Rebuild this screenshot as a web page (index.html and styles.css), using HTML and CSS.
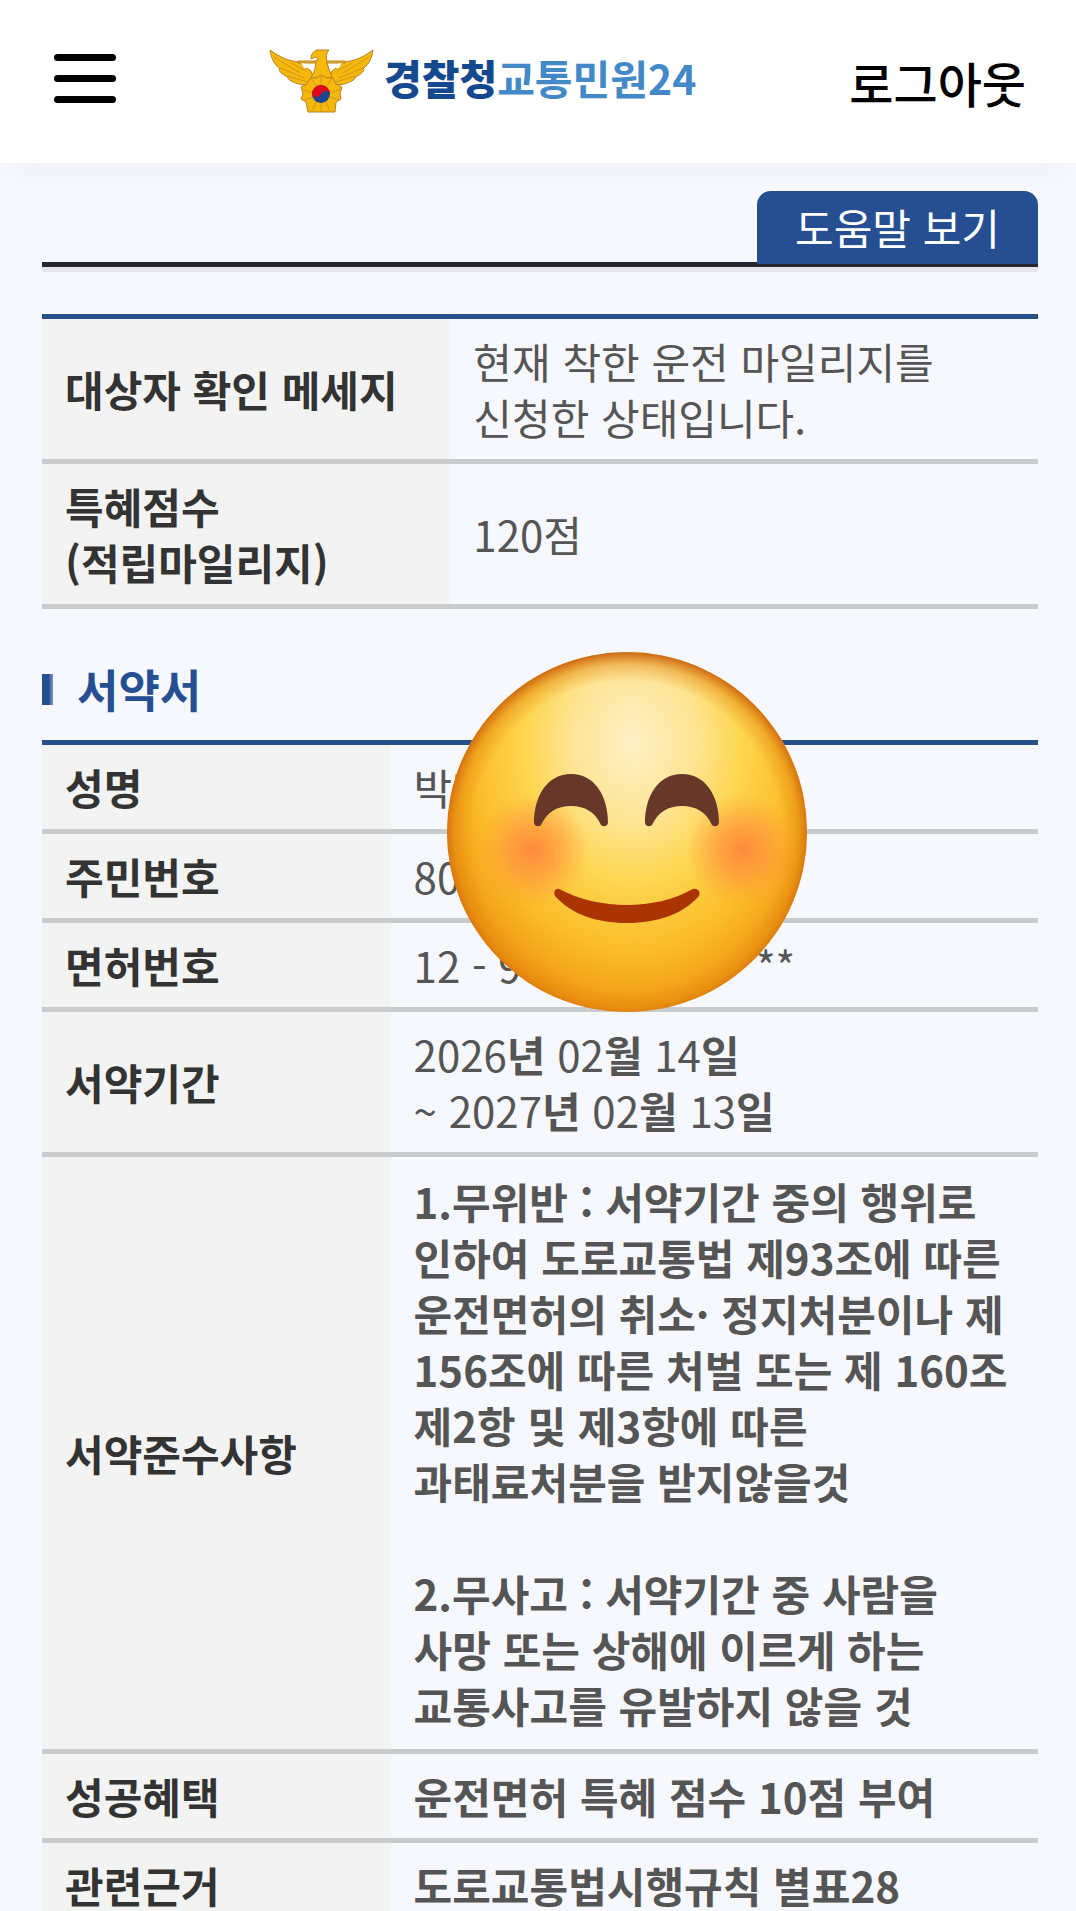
FILE: index.html
```html
<!DOCTYPE html>
<html lang="ko">
<head>
<meta charset="utf-8">
<meta name="viewport" content="width=device-width, initial-scale=1">
<title>경찰청교통민원24</title>
<link rel="stylesheet" href="styles.css">
</head>
<body>
<header class="site-header">
  <button class="menu-button" type="button" aria-label="메뉴">
    <span class="menu-line"></span>
    <span class="menu-line"></span>
    <span class="menu-line"></span>
  </button>
  <a class="logo" href="#">
    <svg class="logo-mark" viewBox="0 0 105 64" aria-hidden="true">
      <g fill="#f6b90b" stroke="#b5802a" stroke-width="1" stroke-linejoin="round">
        <path d="M1 1C12 9 20 12 30 13L42 22L47 36L36 36C24 35 17 29 19 28C11 25 9 20 11 20C4 14 2 8 1 1Z"/>
        <path d="M104 1C93 9 85 12 75 13L63 22L58 36L69 36C81 35 88 29 86 28C94 25 96 20 94 20C101 14 103 8 104 1Z"/>
        <path d="M29 12H76V14H29Z"/>
        <path d="M42 10C42 6 44 2 48 1H60C57 4 57 9 58 14L63 29H42L46 20L47 12C49 11 49 9 47 8Z"/>
        <path d="M52 26L58 29L64 29L67 35L73 38L71 45L72 50L67 53L66 63H39L37 53L32 50L34 45L32 38L38 35L41 29L47 29Z"/>
      </g>
      <path d="M5 8L31 24M11 19L35 29M19 27L38 33M22 14L37 22M100 8L74 24M94 19L70 29M86 27L67 33M83 14L68 22M42 29L48 38M52 27V36M63 29L57 38M33 40L43 44M72 40L62 44M35 51L44 48M70 51L61 48M43 62L48 52M52 63V53M61 62L57 52" fill="none" stroke="#cf9520" stroke-width="1"/>
      <path d="M32 14L41 16L40 19L35 19ZM73 14L64 16L65 19L70 19Z" fill="#fff"/>
      <circle cx="52" cy="45" r="9" fill="#1c4592"/>
      <path d="M43 45A9 9 0 0 1 61 45C60 41 54 41 52 45S44 49 43 45Z" fill="#e2061b"/>
    </svg>
    <span class="logo-text">경찰청<span class="logo-sub">교통민원24</span></span>
  </a>
  <a class="logout" href="#">로그아웃</a>
</header>

<main class="content">
  <div class="help-bar">
    <button class="help-button" type="button">도움말 보기</button>
  </div>

  <table class="info-table status-table">
    <tbody>
      <tr><th scope="row">대상자 확인 메세지</th><td>현재 착한 운전 마일리지를 신청한 상태입니다.</td></tr>
      <tr><th scope="row">특혜점수<br>(적립마일리지)</th><td>120점</td></tr>
    </tbody>
  </table>

  <section class="pledge">
    <h2 class="section-title">서약서</h2>
    <table class="info-table pledge-table">
      <tbody>
        <tr><th scope="row">성명</th><td>박지*</td></tr>
        <tr><th scope="row">주민번호</th><td>80**** - *******</td></tr>
        <tr><th scope="row">면허번호</th><td>12 - 9* - ***********</td></tr>
        <tr><th scope="row">서약기간</th><td>2026<b>년</b> 02<b>월</b> 14<b>일</b><br>~ 2027<b>년</b> 02<b>월</b> 13<b>일</b></td></tr>
        <tr><th scope="row">서약준수사항</th><td class="strong terms">1.무위반 : 서약기간 중의 행위로 인하여 도로교통법 제93조에 따른 운전면허의 취소· 정지처분이나 제 156조에 따른 처벌 또는 제 160조 제2항 및 제3항에 따른 과태료처분을 받지않을것<br><br>2.무사고 : 서약기간 중 사람을 사망 또는 상해에 이르게 하는 교통사고를 유발하지 않을 것</td></tr>
        <tr><th scope="row">성공혜택</th><td class="strong">운전면허 특혜 점수 10점 부여</td></tr>
        <tr><th scope="row">관련근거</th><td class="strong">도로교통법시행규칙 별표28</td></tr>
      </tbody>
    </table>

    <svg class="smile" viewBox="0 0 360 360" aria-hidden="true">
      <defs>
        <radialGradient id="face" gradientUnits="userSpaceOnUse" cx="0" cy="0" r="1" gradientTransform="translate(186 90) scale(215 280)">
          <stop offset="0" stop-color="#fdf0c6"/>
          <stop offset=".28" stop-color="#fee595"/>
          <stop offset=".5" stop-color="#fed650"/>
          <stop offset=".75" stop-color="#fbbc28"/>
          <stop offset="1" stop-color="#ee920f"/>
        </radialGradient>
        <radialGradient id="rim" gradientUnits="userSpaceOnUse" cx="180" cy="184" r="184">
          <stop offset=".84" stop-color="#e08009" stop-opacity="0"/>
          <stop offset=".93" stop-color="#de7e0c" stop-opacity=".4"/>
          <stop offset="1" stop-color="#c9600d" stop-opacity=".95"/>
        </radialGradient>
        <radialGradient id="cheek">
          <stop offset="0" stop-color="#ff8a3d"/>
          <stop offset=".45" stop-color="#ff8f3d" stop-opacity=".62"/>
          <stop offset="1" stop-color="#ff9640" stop-opacity="0"/>
        </radialGradient>
      </defs>
      <circle cx="180" cy="180" r="180" fill="url(#face)"/>
      <circle cx="180" cy="180" r="180" fill="url(#rim)"/>
      <circle cx="86" cy="198" r="56" fill="url(#cheek)"/>
      <circle cx="295" cy="198" r="56" fill="url(#cheek)"/>
      <path d="M87 171C87 143 101 122 124 122S161 143 161 171C160 175 156 175 154 173C148 160 138 154 124 154S100 160 94 173C92 175 88 175 87 171Z" fill="#673728"/>
      <path d="M198 171C198 143 212 122 235 122S272 143 272 171C271 175 267 175 265 173C259 160 249 154 235 154S211 160 205 173C203 175 199 175 198 171Z" fill="#673728"/>
      <path d="M112 237C133 248 157 253 180 253S226 248 246 237C250 236 254 239 252 244C236 262 211 271 180 271S124 262 108 244C106 239 109 236 112 237Z" fill="#ab3500"/>
    </svg>
  </section>
</main>
</body>
</html>
```
FILE: styles.css
```css
* {
  box-sizing: border-box;
}

body {
  margin: 0;
  background: #f7f8fd;
  color: #555;
  font-family: "Noto Sans CJK KR", "Noto Sans", sans-serif;
  font-size: 42px;
  line-height: 56px;
  word-break: keep-all;
}

.site-header {
  display: flex;
  align-items: center;
  justify-content: space-between;
  height: 163px;
  padding: 0 50px 6px 54px;
  background: #fff;
  box-shadow: 0 16px 24px -12px #eceef9;
}

.menu-button {
  display: flex;
  flex-direction: column;
  gap: 14px;
  width: 62px;
  padding: 0;
  border: 0;
  background: none;
}

.menu-line {
  height: 7px;
  border-radius: 4px;
  background: #000;
}

.logo {
  display: flex;
  align-items: flex-start;
  gap: 10px;
  padding-top: 4px;
  text-decoration: none;
}

.logo-mark {
  width: 105px;
  height: 64px;
}

.logo-text {
  color: #14488f;
  font-size: 41px;
  font-weight: 900;
}

.logo-sub {
  color: #4489c7;
  font-weight: 700;
}

.logout {
  padding-top: 6px;
  color: #000;
  font-size: 48px;
  font-weight: 500;
  text-decoration: none;
}

.content {
  padding: 28px 38px 0 42px;
}

.help-bar {
  display: flex;
  justify-content: flex-end;
  border-bottom: 5px solid #26272e;
  box-shadow: 0 5px 0 #e4e4ea;
}

.help-button {
  height: 73px;
  margin-bottom: -2px;
  padding: 0 38px 2px;
  border: 0;
  border-radius: 14px 14px 0 0;
  background: #264f92;
  color: #fff;
  font: inherit;
}

.info-table {
  width: 100%;
  border-collapse: separate;
  border-spacing: 0;
  border-top: 5px solid #264f8c;
  table-layout: fixed;
}

.info-table th,
.info-table td {
  padding: 14px 23px;
  border-bottom: 5px solid #cacbcd;
  text-align: left;
  vertical-align: middle;
}

.info-table th {
  background: #f3f3f3;
  color: #333;
  font-weight: 700;
}

.info-table .terms {
  padding-top: 16px;
  padding-bottom: 16px;
}

.status-table {
  margin-top: 47px;
}

.status-table th {
  width: 41%;
}

.pledge-table th {
  width: 35%;
}

.info-table .strong {
  font-weight: 700;
}

.pledge {
  position: relative;
}

.section-title {
  display: flex;
  align-items: center;
  gap: 24px;
  margin: 0;
  padding: 52px 0 23px;
  color: #264f92;
  font-size: 45px;
  font-weight: 700;
}

.section-title::before {
  content: "";
  width: 11px;
  height: 31px;
  background: linear-gradient(90deg, #264f92 60%, #7f99c2);
}

.smile {
  position: absolute;
  top: 43px;
  left: 405px;
  width: 360px;
  height: 360px;
}
```
